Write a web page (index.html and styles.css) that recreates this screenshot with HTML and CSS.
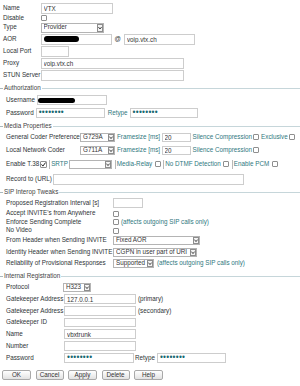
FILE: index.html
```html
<!DOCTYPE html>
<html>
<head>
<meta charset="utf-8">
<title>VTX Provider</title>
<link rel="stylesheet" href="styles.css">
</head>
<body>
<form class="page">
  <div class="top">
    <span class="lbl">Name</span>
    <span class="fld"><input class="in w72" value="VTX"></span>
    <span class="lbl">Disable</span>
    <span class="fld"><span class="cb"></span></span>
    <span class="lbl">Type</span>
    <span class="fld"><span class="sel h10 w63"><span class="opt">Provider</span><span class="arr"><svg width="6" height="8" viewBox="0 0 6 8"><rect x=".5" y=".5" width="5" height="7" fill="#f3f3f3" stroke="#8d8d8d"/><path d="M1.4 3 L3 5 L4.6 3" fill="none" stroke="#333" stroke-width="0.9"/></svg></span></span></span>
    <span class="lbl">AOR</span>
    <span class="fld"><span class="in box w71"><span class="redact r1"></span></span><span class="at">@</span><input class="in w71" value="voip.vtx.ch"></span>
    <span class="lbl">Local Port</span>
    <span class="fld"><input class="in w28" value=""></span>
    <span class="lbl">Proxy</span>
    <span class="fld"><input class="in w143" value="voip.vtx.ch"></span>
    <span class="lbl">STUN Server</span>
    <span class="fld"><input class="in w143" value=""></span>
  </div>

  <div class="legend">Authorization</div>
  <div class="auth">
    <div class="arow first"><span>Username</span><span class="in box h10 w70"><span class="redact r2"></span></span></div>
    <div class="arow"><span>Password</span><span class="in box h10 w69"><span class="dots">••••••••</span></span><span class="teal rt">Retype</span><span class="in box h10 w68"><span class="dots">••••••••</span></span></div>
  </div>

  <div class="legend">Media Properties</div>
  <div class="media">
    <div class="mrow first">
      <span class="mlbl">General Coder Preference</span>
      <span class="sel h9 w35"><span class="opt">G729A</span><span class="arr"><svg width="6" height="7" viewBox="0 0 6 7"><rect x=".5" y=".5" width="5" height="6" fill="#f3f3f3" stroke="#8d8d8d"/><path d="M1.4 2.6 L3 4.6 L4.6 2.6" fill="none" stroke="#333" stroke-width="0.9"/></svg></span></span>
      <span class="teal fs">Framesize [ms]</span>
      <input class="in h9 w29" value="20">
      <span class="teal sc">Silence Compression</span>
      <span class="cb"></span>
      <span class="teal ex">Exclusive</span>
      <span class="cb"></span>
    </div>
    <div class="mrow">
      <span class="mlbl">Local Network Coder</span>
      <span class="sel h9 w35"><span class="opt">G711A</span><span class="arr"><svg width="6" height="7" viewBox="0 0 6 7"><rect x=".5" y=".5" width="5" height="6" fill="#f3f3f3" stroke="#8d8d8d"/><path d="M1.4 2.6 L3 4.6 L4.6 2.6" fill="none" stroke="#333" stroke-width="0.9"/></svg></span></span>
      <span class="teal fs">Framesize [ms]</span>
      <input class="in h9 w29" value="20">
      <span class="teal sc">Silence Compression</span>
      <span class="cb"></span>
    </div>
    <div class="trow">
      <span>Enable T.38</span>
      <span class="cb on t38"><svg width="5" height="5" viewBox="0 0 5 5"><path d="M0.5 2.4 L1.9 4.1 L4.6 0.5" fill="none" stroke="#222" stroke-width="1"/></svg></span>
      <span class="sep"></span>
      <span class="teal">SRTP</span>
      <span class="sel h9 w43 srtp"><span class="opt"></span><span class="arr"><svg width="6" height="7" viewBox="0 0 6 7"><rect x=".5" y=".5" width="5" height="6" fill="#f3f3f3" stroke="#8d8d8d"/><path d="M1.4 2.6 L3 4.6 L4.6 2.6" fill="none" stroke="#333" stroke-width="0.9"/></svg></span></span>
      <span class="sep"></span>
      <span class="teal">Media-Relay</span>
      <span class="cb gapl"></span>
      <span class="sep"></span>
      <span class="teal">No DTMF Detection</span>
      <span class="cb gapl"></span>
      <span class="sep"></span>
      <span class="teal">Enable PCM</span>
      <span class="cb gapl"></span>
    </div>
    <div class="rrow">
      <span>Record to (URL)</span>
      <input class="in w191" value="">
    </div>
  </div>

  <div class="legend">SIP Interop Tweaks</div>
  <div class="sip">
    <span class="lbl">Proposed Registration Interval [s]</span>
    <span class="fld"><input class="in h10 w30" value=""></span>
    <span class="lbl">Accept INVITE's from Anywhere</span>
    <span class="fld"><span class="cb"></span></span>
    <span class="lbl">Enforce Sending Complete</span>
    <span class="fld"><span class="cb"></span><span class="teal note">(affects outgoing SIP calls only)</span></span>
    <span class="lbl">No Video</span>
    <span class="fld"><span class="cb"></span></span>
    <span class="lbl">From Header when Sending INVITE</span>
    <span class="fld"><span class="sel h9 w87"><span class="opt">Fixed AOR</span><span class="arr"><svg width="6" height="7" viewBox="0 0 6 7"><rect x=".5" y=".5" width="5" height="6" fill="#f3f3f3" stroke="#8d8d8d"/><path d="M1.4 2.6 L3 4.6 L4.6 2.6" fill="none" stroke="#333" stroke-width="0.9"/></svg></span></span></span>
    <span class="lbl">Identity Header when Sending INVITE</span>
    <span class="fld"><span class="sel h9 w84"><span class="opt">CGPN in user part of URI</span><span class="arr"><svg width="6" height="7" viewBox="0 0 6 7"><rect x=".5" y=".5" width="5" height="6" fill="#f3f3f3" stroke="#8d8d8d"/><path d="M1.4 2.6 L3 4.6 L4.6 2.6" fill="none" stroke="#333" stroke-width="0.9"/></svg></span></span></span>
    <span class="lbl">Reliability of Provisional Responses</span>
    <span class="fld"><span class="sel h9 w41"><span class="opt">Supported</span><span class="arr"><svg width="6" height="7" viewBox="0 0 6 7"><rect x=".5" y=".5" width="5" height="6" fill="#f3f3f3" stroke="#8d8d8d"/><path d="M1.4 2.6 L3 4.6 L4.6 2.6" fill="none" stroke="#333" stroke-width="0.9"/></svg></span></span><span class="teal note2">(affects outgoing SIP calls only)</span></span>
  </div>

  <div class="legend">Internal Registration</div>
  <div class="intreg">
    <span class="lbl">Protocol</span>
    <span class="fld"><span class="sel h9 w28 proto"><span class="opt">H323</span><span class="arr"><svg width="6" height="7" viewBox="0 0 6 7"><rect x=".5" y=".5" width="5" height="6" fill="#f3f3f3" stroke="#8d8d8d"/><path d="M1.4 2.6 L3 4.6 L4.6 2.6" fill="none" stroke="#333" stroke-width="0.9"/></svg></span></span></span>
    <span class="lbl">Gatekeeper Address</span>
    <span class="fld"><input class="in h10 w72" value="127.0.0.1"><span class="aux">(primary)</span></span>
    <span class="lbl">Gatekeeper Address</span>
    <span class="fld"><input class="in h10 w72" value=""><span class="aux">(secondary)</span></span>
    <span class="lbl">Gatekeeper ID</span>
    <span class="fld"><input class="in h9 w72" value=""></span>
    <span class="lbl">Name</span>
    <span class="fld"><input class="in h10 w72" value="vbxtrunk"></span>
    <span class="lbl">Number</span>
    <span class="fld"><input class="in h10 w72" value=""></span>
    <span class="lbl">Password</span>
    <span class="fld"><span class="in box h10 w70"><span class="dots">••••••••</span></span><span class="aux rt2">Retype</span><span class="in box h10 w69"><span class="dots">••••••••</span></span></span>
  </div>

  <div class="buttons">
    <button type="button" class="btn b29">OK</button>
    <button type="button" class="btn b28">Cancel</button>
    <button type="button" class="btn b29">Apply</button>
    <button type="button" class="btn b28">Delete</button>
    <button type="button" class="btn b29">Help</button>
  </div>
</form>
</body>
</html>
```

FILE: styles.css
```css
* { box-sizing: border-box; margin: 0; padding: 0; }

html, body { background: #fff; }

body {
  margin: 0;
  font-family: "Liberation Sans", Arial, sans-serif;
  font-size: 6.3px;
  line-height: 1;
  color: #2e3436;
}

.page {
  width: 300px;
  padding-top: 2px;
}

/* generic fields */
.in {
  display: inline-flex;
  align-items: center;
  height: 11px;
  border: 1px solid #cdcdcd;
  background: #fff;
  padding: 0 2px;
  font: inherit;
  color: #333;
  outline: none;
}
.in.h10 { height: 10px; }
.in.h9 { height: 9px; }
.box { overflow: hidden; }

.w28 { width: 28px; }
.w29 { width: 29px; }
.w30 { width: 30px; }
.w35 { width: 35px; }
.w41 { width: 41px; }
.w43 { width: 43px; }
.w63 { width: 63px; }
.w68 { width: 68px; }
.w69 { width: 69px; }
.w70 { width: 70px; }
.w71 { width: 71px; }
.w72 { width: 72px; }
.w84 { width: 84px; }
.w87 { width: 87px; }
.w143 { width: 143px; }
.w191 { width: 191px; }

.sel {
  display: inline-flex;
  align-items: center;
  justify-content: space-between;
  border: 1px solid #b4b4b4;
  background: #fff;
  padding-left: 2px;
  padding-right: 0;
  color: #333;
  white-space: nowrap;
}
.sel.h10 { height: 10px; }
.sel.h9 { height: 9px; }
.opt { overflow: hidden; min-width: 0; flex: 1; }
.arr { display: flex; flex: none; }
.arr svg { display: block; }

.cb {
  display: inline-flex;
  align-items: center;
  justify-content: center;
  width: 6px;
  height: 6px;
  border: 1px solid #8f8f8f;
  border-radius: 1px;
  background: #fff;
  flex: none;
}
.cb.on { width: 7px; height: 7px; }
.cb svg { display: block; }

.teal { color: #2f7880; }

.redact {
  display: inline-block;
  background: #000;
  border-radius: 3px;
}
.r1 { width: 35px; height: 6px; }
.r2 { width: 37px; height: 5px; margin-left: -2px; }

.dots {
  color: #176870;
  letter-spacing: 0.3px;
  font-size: 8.2px;
  line-height: 1;
}

/* top section */
.top {
  display: grid;
  grid-template-columns: 37.5px auto;
  grid-template-rows: 12px 8px 11px 12px 12px 12px 12px;
  padding-left: 3px;
}
.lbl, .fld {
  display: flex;
  align-items: center;
  white-space: nowrap;
}
.at { margin: 0 3px 0 3px; }

/* legends */
.legend {
  display: flex;
  align-items: center;
  height: 8px;
  margin-top: 3px;
  color: #444;
  white-space: nowrap;
}
.legend::before {
  content: "";
  width: 3px;
  border-top: 1px solid #a9b9bd;
  margin-right: 1px;
}
.legend::after {
  content: "";
  flex: 1;
  border-top: 1px solid #c6d6da;
  margin-left: 1px;
}

/* authorization */
.auth { padding-left: 6px; margin-bottom: 1px; }
.arow {
  display: flex;
  align-items: center;
  gap: 2px;
  height: 12px;
  margin-top: 1px;
  white-space: nowrap;
}
.arow.first { margin-top: 2px; }
.arow .rt { margin-left: 1px; }

/* media */
.media { padding-left: 6px; }
.mrow {
  display: flex;
  align-items: center;
  height: 12px;
  margin-top: 1px;
  white-space: nowrap;
}
.mlbl { width: 74px; }
.fs { margin-left: 2px; margin-right: 1.5px; }
.sc { margin-left: 2px; margin-right: 1px; }
.ex { margin-left: 2px; margin-right: 1px; }

.trow {
  display: flex;
  align-items: center;
  height: 10px;
  margin-top: 3px;
  white-space: nowrap;
}
.t38 { margin-left: 0.5px; }
.sep {
  display: inline-block;
  width: 1px;
  height: 9px;
  background: #b9b9b9;
  margin: 0 1px 0 2.5px;
}
.srtp { margin-left: 1.5px; }
.gapl { margin-left: 2.5px; }

.rrow {
  display: flex;
  align-items: center;
  gap: 1.5px;
  height: 12px;
  margin-top: 4px;
  white-space: nowrap;
}

/* sip */
.sip {
  display: grid;
  grid-template-columns: 107px auto;
  grid-template-rows: 12px 9px 8px 9px 11px 12px 11px;
  padding-left: 6px;
  margin-top: 1px;
}
.note { margin-left: 2px; }
.note2 { margin-left: 3px; }

/* internal registration */
.intreg {
  display: grid;
  grid-template-columns: 58px auto;
  grid-template-rows: 12px 12px 12px 11px 12px 12px 12px;
  padding-left: 6px;
  margin-top: 1px;
}
.proto { margin-left: -1px; }
.aux { margin-left: 2px; color: #2e3436; }
.rt2 { margin-left: 1px; margin-right: 2px; }

/* buttons */
.buttons {
  display: flex;
  gap: 4.5px;
  padding-left: 2px;
  margin-top: 6px;
}
.btn {
  height: 10px;
  border: 1px solid #a9a9a9;
  border-radius: 2px;
  background: linear-gradient(#ffffff, #e2e2e2);
  font: inherit;
  color: #333;
  line-height: 1;
  padding: 0;
}
.b28 { width: 28px; }
.b29 { width: 29px; }
```
